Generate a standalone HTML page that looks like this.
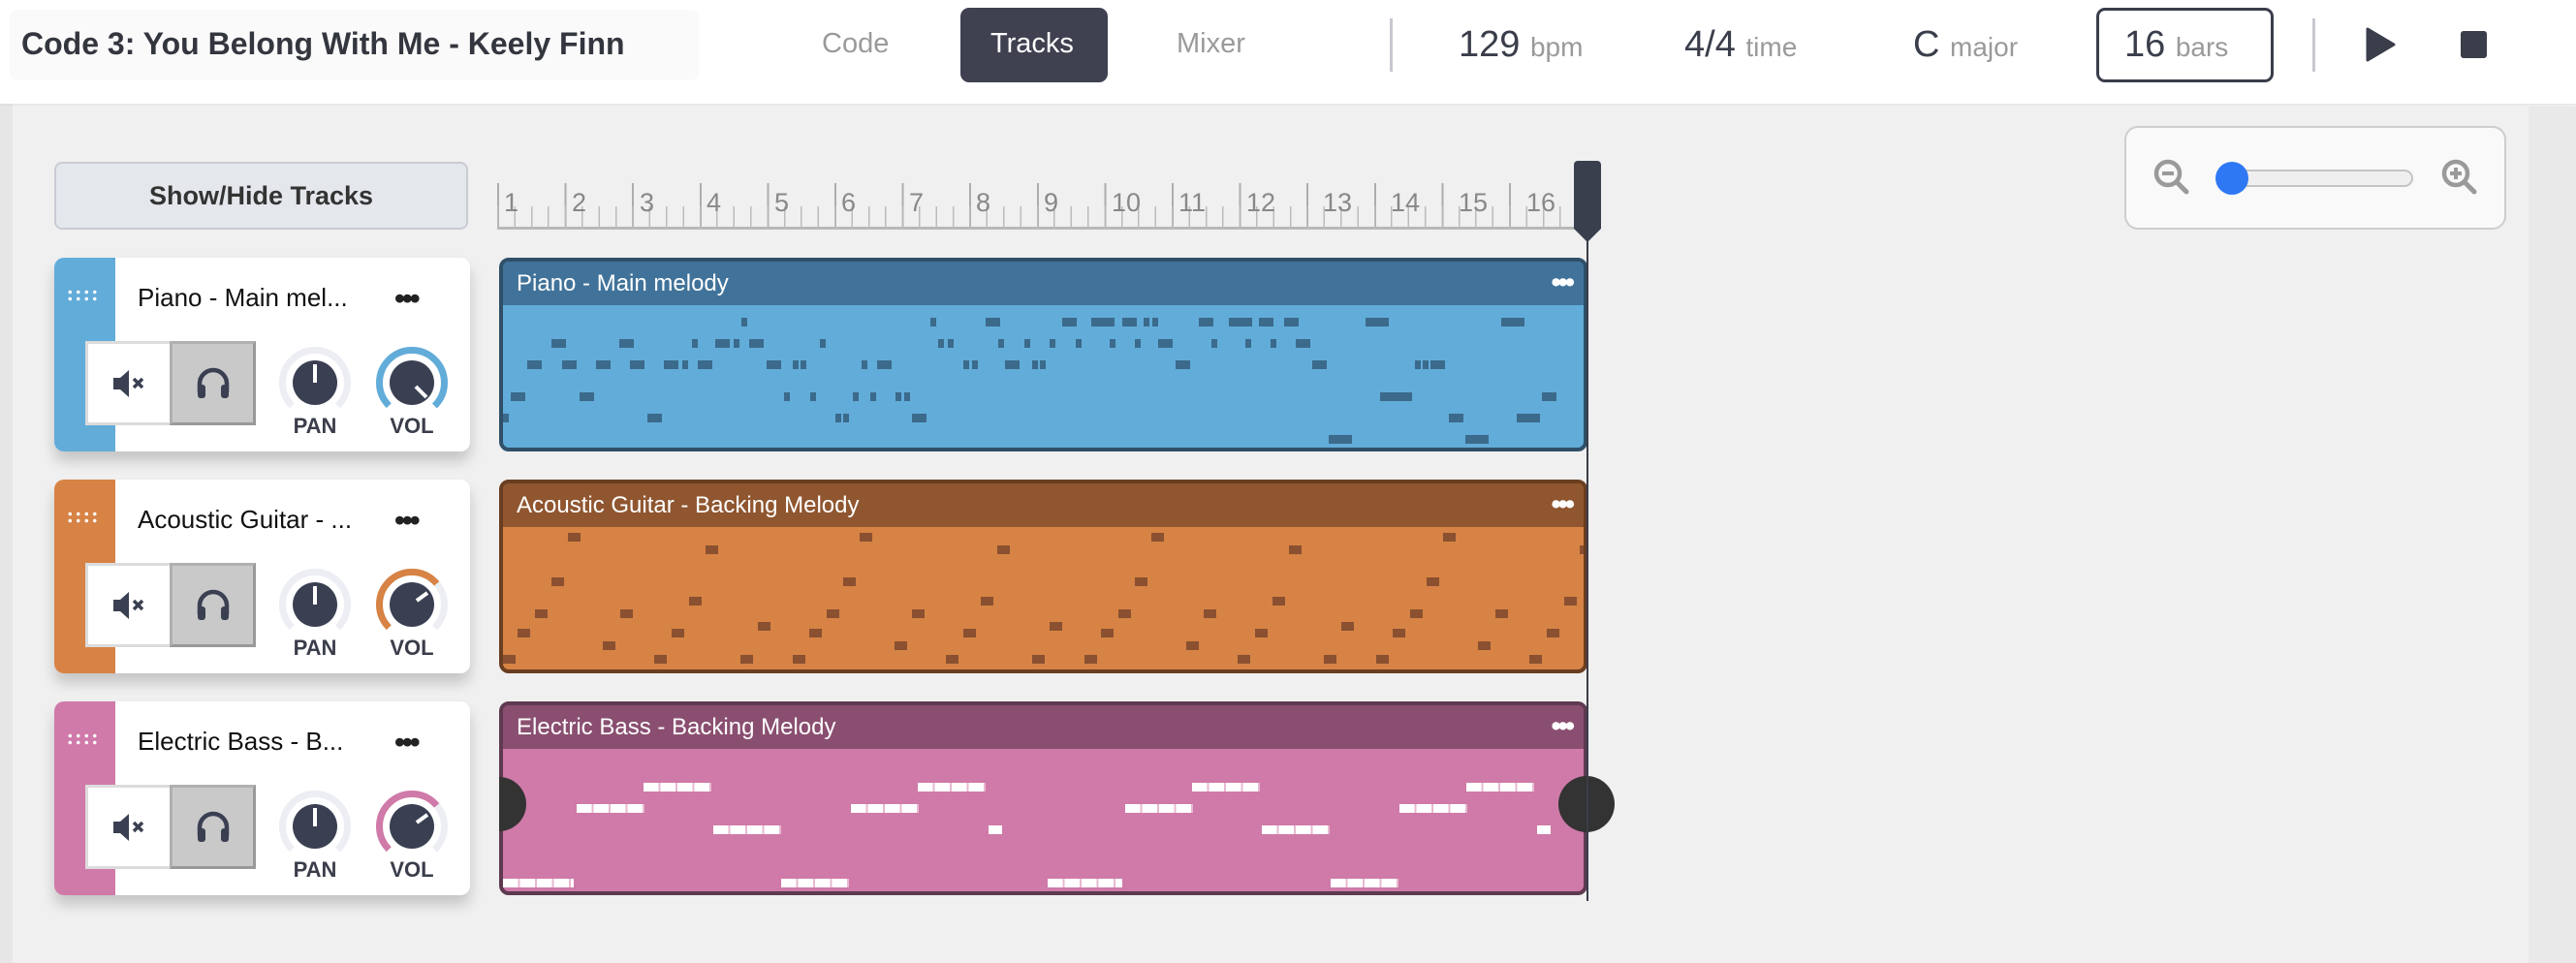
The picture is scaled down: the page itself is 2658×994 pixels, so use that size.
<!DOCTYPE html>
<html><head><meta charset="utf-8"><style>
*{margin:0;padding:0;box-sizing:border-box}
body{width:2658px;height:994px;overflow:hidden;background:#f0f0f0;font-family:"Liberation Sans",sans-serif;position:relative}
.a{position:absolute}
#hdr{left:0;top:0;width:2658px;height:107px;background:#fff;box-shadow:0 1px 3px rgba(0,0,0,.06)}
.nav{font-size:29px;color:#9a9a9a;top:29px}
.val{top:25px;font-size:38px;color:#3a3d4a;white-space:nowrap}
.val small{font-size:28px;color:#9a9a9a}
.vd{width:3px;height:55px;top:19px;background:#c8c8d2}
.card{width:429px;height:200px;background:#fff;border-radius:10px;overflow:hidden;box-shadow:0 10px 14px rgba(0,0,0,.18)}
.stripe{left:0;top:0;width:63px;height:200px}
.dots{left:12px;top:32px;width:34px;height:14px;background-image:radial-gradient(circle,#fff 1.6px,transparent 2px);background-size:8.5px 7px}
.name{left:86px;top:26px;font-size:26px;color:#111;white-space:nowrap}
.more{left:351px;top:24px;font-size:31px;color:#222;letter-spacing:-3px;font-weight:bold}
.btns{left:32px;top:86px;width:173px;height:87px;border:3px solid #dcdcdc;background:#fff}
.solo{left:84px;top:-3px;width:89px;height:87px;background:#c9c9c9;border:3px solid #a9a9a9;border-color:#b0b0b0 #999 #999 #b0b0b0}
.lbl{font-size:22px;font-weight:bold;color:#3a3d4a;top:161px;width:80px;text-align:center}
.clip{left:515px;width:1123px;height:200px;border:4px solid;border-radius:10px;overflow:hidden}
.ch{left:0;top:0;width:100%;height:45px}
.ct{left:14px;top:9px;font-size:24px;color:#fff;white-space:nowrap}
.cm{right:12px;top:6px;font-size:29px;color:#fff;font-weight:bold;letter-spacing:-3px}
.p{position:absolute;height:9px;background:#3b6a8b;display:block}
.t{width:6px}.s{width:15px}.w{width:24px}
.g{position:absolute;width:13px;height:9px;background:#8a5030;display:block}
.b{position:absolute;height:9px;display:block;background:repeating-linear-gradient(to right,#fff 0 15.5px,#e8b8d0 15.5px 17.5px)}
.num{top:194px;font-size:27px;color:#888}
</style></head><body>
<div class="a" style="left:0;top:107px;width:13px;height:887px;background:#e6e6e6"></div>
<div class="a" style="left:2609px;top:110px;width:49px;height:884px;background:#e9e9e9"></div>
<div class="a" id="hdr"></div>
<div class="a" style="left:10px;top:10px;width:711px;height:73px;background:#fafafa;border-radius:8px"></div>
<div class="a" style="left:22px;top:27px;font-size:32px;font-weight:bold;color:#34363f;white-space:nowrap">Code 3: You Belong With Me - Keely Finn</div>
<div class="a nav" style="left:848px">Code</div>
<div class="a" style="left:991px;top:8px;width:152px;height:77px;background:#3f4150;border-radius:9px"></div>
<div class="a nav" style="left:1022px;color:#fff">Tracks</div>
<div class="a nav" style="left:1214px">Mixer</div>
<div class="a vd" style="left:1434px"></div>
<div class="a val" style="left:1505px">129 <small>bpm</small></div>
<div class="a val" style="left:1738px">4/4 <small>time</small></div>
<div class="a val" style="left:1974px">C <small>major</small></div>
<div class="a" style="left:2163px;top:8px;width:183px;height:77px;border:3px solid #3a3d4a;border-radius:9px"></div>
<div class="a val" style="left:2192px">16 <small>bars</small></div>
<div class="a vd" style="left:2386px"></div>
<svg class="a" style="left:2440px;top:28px" width="34" height="36"><path d="M3 2 L30 18 L3 34Z" fill="#3a3d4a" stroke="#3a3d4a" stroke-width="3" stroke-linejoin="round"/></svg>
<div class="a" style="left:2539px;top:32px;width:27px;height:28px;background:#3a3d4a;border-radius:3px"></div>

<div class="a" style="left:56px;top:167px;width:427px;height:70px;background:#e4e7ec;border:2px solid #c9ccd2;border-radius:8px;font-size:27px;font-weight:bold;color:#333;text-align:center;line-height:66px">Show/Hide Tracks</div>

<div class="a" style="left:513px;top:189px;width:1118px;height:48px;border-bottom:3px solid #b8b8b8;background:repeating-linear-gradient(to right,#adadad 0 2px,transparent 2px 69.6px)"></div>
<div class="a" style="left:513px;top:213px;width:1118px;height:24px;background:repeating-linear-gradient(to right,#bbb 0 1.5px,transparent 1.5px 17.4px)"></div>
<div class="a num" style="left:520px">1</div><div class="a num" style="left:590px">2</div><div class="a num" style="left:660px">3</div><div class="a num" style="left:729px">4</div><div class="a num" style="left:799px">5</div><div class="a num" style="left:868px">6</div><div class="a num" style="left:938px">7</div><div class="a num" style="left:1007px">8</div><div class="a num" style="left:1077px">9</div><div class="a num" style="left:1147px">10</div><div class="a num" style="left:1216px">11</div><div class="a num" style="left:1286px">12</div><div class="a num" style="left:1365px">13</div><div class="a num" style="left:1435px">14</div><div class="a num" style="left:1505px">15</div><div class="a num" style="left:1575px">16</div>

<div class="a" style="left:2192px;top:130px;width:394px;height:107px;background:#f9f9f9;border:2px solid #cdcdcd;border-radius:14px"></div>
<svg class="a" style="left:2218px;top:160px" width="45" height="45"><circle cx="19" cy="19" r="12" fill="none" stroke="#9a9a9a" stroke-width="4.5"/><line x1="13" y1="19" x2="25" y2="19" stroke="#9a9a9a" stroke-width="4"/><line x1="28" y1="28" x2="38" y2="38" stroke="#9a9a9a" stroke-width="5" stroke-linecap="round"/></svg>
<svg class="a" style="left:2515px;top:160px" width="45" height="45"><circle cx="19" cy="19" r="12" fill="none" stroke="#9a9a9a" stroke-width="4.5"/><line x1="13" y1="19" x2="25" y2="19" stroke="#9a9a9a" stroke-width="4"/><line x1="19" y1="13" x2="19" y2="25" stroke="#9a9a9a" stroke-width="4"/><line x1="28" y1="28" x2="38" y2="38" stroke="#9a9a9a" stroke-width="5" stroke-linecap="round"/></svg>
<div class="a" style="left:2295px;top:175px;width:195px;height:18px;background:#efefef;border:2px solid #c4c4c4;border-radius:9px"></div>
<div class="a" style="left:2286px;top:167px;width:34px;height:34px;background:#2f78f4;border-radius:50%"></div>

<!-- track cards -->
<div class="a card" style="left:56px;top:266px"><div class="a stripe" style="background:#62acd9"></div><div class="a dots"></div><div class="a name">Piano - Main mel...</div><div class="a more">•••</div>
<div class="a btns"><svg class="a" style="left:22px;top:24px" width="40" height="34"><path d="M4 11h7l9-8v28l-9-8H4z" fill="#3a4052"/><path d="M25 12l9 9M34 12l-9 9" stroke="#3a4052" stroke-width="3.5"/></svg><div class="a solo"><svg class="a" style="left:22px;top:20px" width="40" height="40"><path d="M6 30v-9a14 14 0 0 1 28 0v9" fill="none" stroke="#3a4052" stroke-width="4.5"/><rect x="4" y="22" width="8" height="14" rx="3" fill="#3a4052"/><rect x="28" y="22" width="8" height="14" rx="3" fill="#3a4052"/></svg></div></div>
<svg class="a" style="left:229px;top:89px" width="80" height="80"><circle cx="40" cy="40" r="33.5" fill="none" stroke="#eceef3" stroke-width="7" stroke-dasharray="158 300" transform="rotate(135 40 40)"/><circle cx="40" cy="40" r="23" fill="#3a4052"/><line x1="40" y1="40" x2="40" y2="21" stroke="#fff" stroke-width="4"/></svg>
<svg class="a" style="left:329px;top:89px" width="80" height="80"><circle cx="40" cy="40" r="33.5" fill="none" stroke="#62acd9" stroke-width="7" stroke-dasharray="158 300" transform="rotate(135 40 40)"/><circle cx="40" cy="40" r="23" fill="#3a4052"/><line x1="44" y1="44" x2="55" y2="55" stroke="#fff" stroke-width="4"/></svg>
<div class="a lbl" style="left:229px">PAN</div><div class="a lbl" style="left:329px">VOL</div></div>

<div class="a card" style="left:56px;top:495px"><div class="a stripe" style="background:#d78345"></div><div class="a dots"></div><div class="a name">Acoustic Guitar - ...</div><div class="a more">•••</div>
<div class="a btns"><svg class="a" style="left:22px;top:24px" width="40" height="34"><path d="M4 11h7l9-8v28l-9-8H4z" fill="#3a4052"/><path d="M25 12l9 9M34 12l-9 9" stroke="#3a4052" stroke-width="3.5"/></svg><div class="a solo"><svg class="a" style="left:22px;top:20px" width="40" height="40"><path d="M6 30v-9a14 14 0 0 1 28 0v9" fill="none" stroke="#3a4052" stroke-width="4.5"/><rect x="4" y="22" width="8" height="14" rx="3" fill="#3a4052"/><rect x="28" y="22" width="8" height="14" rx="3" fill="#3a4052"/></svg></div></div>
<svg class="a" style="left:229px;top:89px" width="80" height="80"><circle cx="40" cy="40" r="33.5" fill="none" stroke="#eceef3" stroke-width="7" stroke-dasharray="158 300" transform="rotate(135 40 40)"/><circle cx="40" cy="40" r="23" fill="#3a4052"/><line x1="40" y1="40" x2="40" y2="21" stroke="#fff" stroke-width="4"/></svg>
<svg class="a" style="left:329px;top:89px" width="80" height="80"><circle cx="40" cy="40" r="33.5" fill="none" stroke="#eceef3" stroke-width="7" stroke-dasharray="158 300" transform="rotate(135 40 40)"/><circle cx="40" cy="40" r="33.5" fill="none" stroke="#d78345" stroke-width="7" stroke-dasharray="108 300" transform="rotate(135 40 40)"/><circle cx="40" cy="40" r="23" fill="#3a4052"/><line x1="45" y1="36" x2="56" y2="28" stroke="#fff" stroke-width="4"/></svg>
<div class="a lbl" style="left:229px">PAN</div><div class="a lbl" style="left:329px">VOL</div></div>

<div class="a card" style="left:56px;top:724px"><div class="a stripe" style="background:#cf7aa8"></div><div class="a dots"></div><div class="a name">Electric Bass - B...</div><div class="a more">•••</div>
<div class="a btns"><svg class="a" style="left:22px;top:24px" width="40" height="34"><path d="M4 11h7l9-8v28l-9-8H4z" fill="#3a4052"/><path d="M25 12l9 9M34 12l-9 9" stroke="#3a4052" stroke-width="3.5"/></svg><div class="a solo"><svg class="a" style="left:22px;top:20px" width="40" height="40"><path d="M6 30v-9a14 14 0 0 1 28 0v9" fill="none" stroke="#3a4052" stroke-width="4.5"/><rect x="4" y="22" width="8" height="14" rx="3" fill="#3a4052"/><rect x="28" y="22" width="8" height="14" rx="3" fill="#3a4052"/></svg></div></div>
<svg class="a" style="left:229px;top:89px" width="80" height="80"><circle cx="40" cy="40" r="33.5" fill="none" stroke="#eceef3" stroke-width="7" stroke-dasharray="158 300" transform="rotate(135 40 40)"/><circle cx="40" cy="40" r="23" fill="#3a4052"/><line x1="40" y1="40" x2="40" y2="21" stroke="#fff" stroke-width="4"/></svg>
<svg class="a" style="left:329px;top:89px" width="80" height="80"><circle cx="40" cy="40" r="33.5" fill="none" stroke="#eceef3" stroke-width="7" stroke-dasharray="158 300" transform="rotate(135 40 40)"/><circle cx="40" cy="40" r="33.5" fill="none" stroke="#cf7aa8" stroke-width="7" stroke-dasharray="108 300" transform="rotate(135 40 40)"/><circle cx="40" cy="40" r="23" fill="#3a4052"/><line x1="45" y1="36" x2="56" y2="28" stroke="#fff" stroke-width="4"/></svg>
<div class="a lbl" style="left:229px">PAN</div><div class="a lbl" style="left:329px">VOL</div></div>

<!-- clips -->
<div class="a clip" style="top:266px;background:#62acd9;border-color:#2f5068"><div class="a ch" style="background:#41739a"></div><div class="a ct">Piano - Main melody</div><div class="a cm">•••</div></div>
<div class="a clip" style="top:495px;background:#d78345;border-color:#6a3e20"><div class="a ch" style="background:#8f5630"></div><div class="a ct">Acoustic Guitar - Backing Melody</div><div class="a cm">•••</div></div>
<div class="a clip" style="top:724px;background:#cf7aa8;border-color:#5e3a50"><div class="a ch" style="background:#8a4f70"></div><div class="a ct">Electric Bass - Backing Melody</div><div class="a cm">•••</div></div>

<!-- piano notes -->
<div>
<i class="p t" style="left:765px;top:328px"></i><i class="p t" style="left:960px;top:328px"></i><i class="p s" style="left:1017px;top:328px"></i><i class="p s" style="left:1096px;top:328px"></i><i class="p w" style="left:1126px;top:328px"></i><i class="p s" style="left:1158px;top:328px"></i><i class="p t" style="left:1180px;top:328px"></i><i class="p t" style="left:1189px;top:328px"></i><i class="p s" style="left:1237px;top:328px"></i><i class="p w" style="left:1268px;top:328px"></i><i class="p s" style="left:1299px;top:328px"></i><i class="p s" style="left:1325px;top:328px"></i><i class="p w" style="left:1409px;top:328px"></i><i class="p w" style="left:1549px;top:328px"></i>
<i class="p s" style="left:569px;top:350px"></i><i class="p s" style="left:639px;top:350px"></i><i class="p t" style="left:714px;top:350px"></i><i class="p s" style="left:738px;top:350px"></i><i class="p t" style="left:757px;top:350px"></i><i class="p s" style="left:773px;top:350px"></i><i class="p t" style="left:846px;top:350px"></i><i class="p t" style="left:968px;top:350px"></i><i class="p t" style="left:978px;top:350px"></i><i class="p t" style="left:1030px;top:350px"></i><i class="p t" style="left:1057px;top:350px"></i><i class="p t" style="left:1083px;top:350px"></i><i class="p t" style="left:1110px;top:350px"></i><i class="p t" style="left:1145px;top:350px"></i><i class="p t" style="left:1171px;top:350px"></i><i class="p s" style="left:1195px;top:350px"></i><i class="p t" style="left:1250px;top:350px"></i><i class="p t" style="left:1285px;top:350px"></i><i class="p t" style="left:1311px;top:350px"></i><i class="p s" style="left:1337px;top:350px"></i>
<i class="p s" style="left:544px;top:372px"></i><i class="p s" style="left:580px;top:372px"></i><i class="p s" style="left:615px;top:372px"></i><i class="p s" style="left:650px;top:372px"></i><i class="p s" style="left:685px;top:372px"></i><i class="p t" style="left:704px;top:372px"></i><i class="p s" style="left:720px;top:372px"></i><i class="p s" style="left:791px;top:372px"></i><i class="p t" style="left:818px;top:372px"></i><i class="p t" style="left:826px;top:372px"></i><i class="p t" style="left:889px;top:372px"></i><i class="p s" style="left:905px;top:372px"></i><i class="p t" style="left:994px;top:372px"></i><i class="p t" style="left:1003px;top:372px"></i><i class="p s" style="left:1037px;top:372px"></i><i class="p t" style="left:1065px;top:372px"></i><i class="p t" style="left:1073px;top:372px"></i><i class="p s" style="left:1213px;top:372px"></i><i class="p s" style="left:1354px;top:372px"></i><i class="p t" style="left:1460px;top:372px"></i><i class="p t" style="left:1468px;top:372px"></i><i class="p s" style="left:1476px;top:372px"></i>
<i class="p s" style="left:527px;top:405px"></i><i class="p s" style="left:598px;top:405px"></i><i class="p t" style="left:809px;top:405px"></i><i class="p t" style="left:836px;top:405px"></i><i class="p t" style="left:880px;top:405px"></i><i class="p t" style="left:898px;top:405px"></i><i class="p t" style="left:924px;top:405px"></i><i class="p t" style="left:933px;top:405px"></i><i class="p" style="left:1424px;top:405px;width:33px"></i><i class="p s" style="left:1591px;top:405px"></i>
<i class="p t" style="left:519px;top:427px"></i><i class="p s" style="left:668px;top:427px"></i><i class="p t" style="left:862px;top:427px"></i><i class="p t" style="left:870px;top:427px"></i><i class="p s" style="left:941px;top:427px"></i><i class="p s" style="left:1495px;top:427px"></i><i class="p w" style="left:1565px;top:427px"></i>
<i class="p w" style="left:1371px;top:449px"></i><i class="p w" style="left:1512px;top:449px"></i>
</div>
<!-- guitar notes -->
<div>
<i class="g" style="left:586px;top:550px"></i><i class="g" style="left:728px;top:563px"></i><i class="g" style="left:569px;top:596px"></i><i class="g" style="left:711px;top:616px"></i><i class="g" style="left:552px;top:629px"></i><i class="g" style="left:640px;top:629px"></i><i class="g" style="left:782px;top:642px"></i><i class="g" style="left:534px;top:649px"></i><i class="g" style="left:693px;top:649px"></i><i class="g" style="left:622px;top:662px"></i><i class="g" style="left:519px;top:676px"></i><i class="g" style="left:675px;top:676px"></i><i class="g" style="left:764px;top:676px"></i>
<i class="g" style="left:887px;top:550px"></i><i class="g" style="left:1029px;top:563px"></i><i class="g" style="left:870px;top:596px"></i><i class="g" style="left:1012px;top:616px"></i><i class="g" style="left:853px;top:629px"></i><i class="g" style="left:941px;top:629px"></i><i class="g" style="left:1083px;top:642px"></i><i class="g" style="left:835px;top:649px"></i><i class="g" style="left:994px;top:649px"></i><i class="g" style="left:923px;top:662px"></i><i class="g" style="left:818px;top:676px"></i><i class="g" style="left:976px;top:676px"></i><i class="g" style="left:1065px;top:676px"></i>
<i class="g" style="left:1188px;top:550px"></i><i class="g" style="left:1330px;top:563px"></i><i class="g" style="left:1171px;top:596px"></i><i class="g" style="left:1313px;top:616px"></i><i class="g" style="left:1154px;top:629px"></i><i class="g" style="left:1242px;top:629px"></i><i class="g" style="left:1384px;top:642px"></i><i class="g" style="left:1136px;top:649px"></i><i class="g" style="left:1295px;top:649px"></i><i class="g" style="left:1224px;top:662px"></i><i class="g" style="left:1119px;top:676px"></i><i class="g" style="left:1277px;top:676px"></i><i class="g" style="left:1366px;top:676px"></i>
<i class="g" style="left:1489px;top:550px"></i><i class="g" style="left:1630px;top:563px;width:4px"></i><i class="g" style="left:1472px;top:596px"></i><i class="g" style="left:1614px;top:616px"></i><i class="g" style="left:1455px;top:629px"></i><i class="g" style="left:1543px;top:629px"></i><i class="g" style="left:1437px;top:649px"></i><i class="g" style="left:1596px;top:649px"></i><i class="g" style="left:1525px;top:662px"></i><i class="g" style="left:1420px;top:676px"></i><i class="g" style="left:1578px;top:676px"></i>
</div>
<!-- bass notes -->
<div>
<i class="b" style="left:664px;top:808px;width:70px"></i><i class="b" style="left:947px;top:808px;width:70px"></i><i class="b" style="left:1230px;top:808px;width:70px"></i><i class="b" style="left:1513px;top:808px;width:70px"></i>
<i class="b" style="left:595px;top:830px;width:70px"></i><i class="b" style="left:878px;top:830px;width:70px"></i><i class="b" style="left:1161px;top:830px;width:70px"></i><i class="b" style="left:1444px;top:830px;width:70px"></i>
<i class="b" style="left:736px;top:852px;width:70px"></i><i class="b" style="left:1020px;top:852px;width:14px"></i><i class="b" style="left:1302px;top:852px;width:70px"></i><i class="b" style="left:1586px;top:852px;width:14px"></i>
<i class="b" style="left:519px;top:907px;width:73px"></i><i class="b" style="left:806px;top:907px;width:70px"></i><i class="b" style="left:1081px;top:907px;width:77px"></i><i class="b" style="left:1373px;top:907px;width:70px"></i>
</div>
<div class="a" style="left:515px;top:802px;width:28px;height:56px;background:#333;border-radius:0 28px 28px 0"></div>
<div class="a" style="left:1608px;top:801px;width:58px;height:58px;background:#333;border-radius:50%"></div>

<!-- playhead -->
<div class="a" style="left:1637px;top:240px;width:2px;height:690px;background:#3a3d4a"></div>
<svg class="a" style="left:1623px;top:165px" width="30" height="86"><path d="M1 5a4 4 0 0 1 4-4h20a4 4 0 0 1 4 4v66l-14 14l-14-14z" fill="#3a3f4e"/></svg>
</body></html>
